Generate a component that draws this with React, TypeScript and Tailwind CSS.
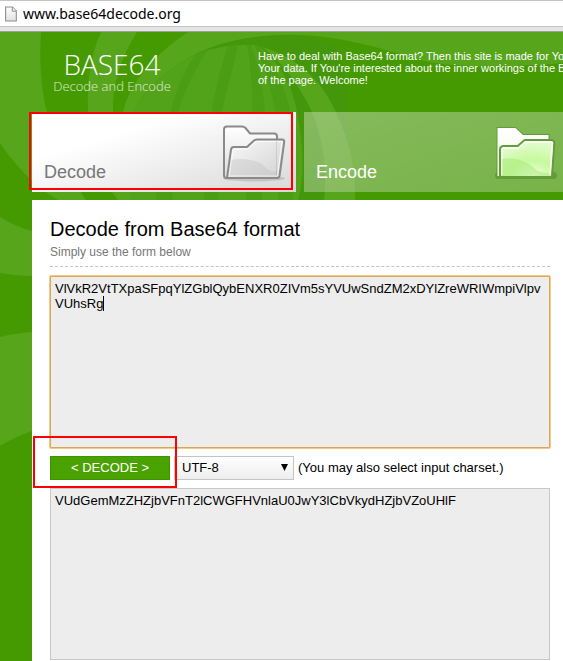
const INPUT_TEXT =
  "VlVkR2VtTXpaSFpqYlZGblQybENXR0ZIVm5sYVUwSndZM2xDYlZreWRIWmpiVlpvVUhsRg";
const OUTPUT_TEXT = "VUdGemMzZHZjbVFnT2lCWGFHVnlaU0JwY3lCbVkydHZjbVZoUHlF";

const PageIcon = () => (
  <svg viewBox="0 0 12 16" className="h-4 w-3 shrink-0" aria-hidden="true">
    <defs>
      <linearGradient id="sheet" x1="0" y1="0" x2="0" y2="1">
        <stop offset="0" stopColor="#fff" />
        <stop offset="1" stopColor="#e2e2e2" />
      </linearGradient>
    </defs>
    <path
      d="M.6 1h6.9L11.3 5v10H.6z"
      fill="url(#sheet)"
      stroke="#8e8e8e"
      strokeWidth="1.1"
    />
    <path d="M7.3 1v4.2h4" fill="#f6f6f6" stroke="#8e8e8e" />
  </svg>
);

const Sunburst = () => (
  <svg
    viewBox="0 32 563 629"
    className="absolute left-0 top-0 w-[563px]"
    aria-hidden="true"
  >
    <g fill="#56a51b">
      <path d="M0 32H41C39 60 41 90 47 112C55 146 68 174 86 200H58C34 186 14 164 0 143Z" />
      <path d="M101 32H137C120 60 112 85 113 112C116 150 130 180 152 200H118C96 172 88 145 88 112C87 82 90 56 101 32Z" />
      <path d="M188 32H563V63C510 68 450 68 420 60C380 48 340 36 300 35C270 34 235 38 210 48C175 62 146 86 133 112H123C130 82 155 54 188 32Z" />
      <path d="M0 217C10 223 21 228 32 231V276C20 276 10 275 0 273Z" />
      <path d="M0 337C12 334 22 333 32 332V431C20 435 10 440 0 446Z" />
    </g>
    {/* shaded arch */}
    <path
      d="M133 112C146 86 175 62 210 48C235 38 270 34 300 36C315 38 330 42 340 50L350 112L345 200H133Z"
      fill="#449512"
      opacity="0.6"
    />
    <path
      d="M130 116C145 86 175 62 205 51C222 46 238 44 257 45C280 60 294 90 297 112C304 145 304 180 298 200H130Z"
      fill="#52a21a"
    />
    {/* dark ribs inside the arch */}
    <g fill="#479a0f" opacity="0.6">
      <path d="M197 53L207 50C196 70 184 90 178 112L172 200H156C160 160 168 90 197 53Z" />
      <path d="M228 46L238 45C233 70 226 90 222 112L218 200H204C206 150 212 90 228 46Z" />
      <path d="M247 45H251C259 66 263 90 265 112L262 200H246C252 150 256 90 247 45Z" />
      <path d="M254 45H257C276 66 286 90 290 112C297 145 297 175 292 200H278C284 150 276 86 254 45Z" />
    </g>
    <path
      d="M262 47C300 58 322 82 336 112C350 142 356 170 355 200H324C328 166 322 138 312 112C300 86 282 62 262 47Z"
      fill="#56a51b"
    />
  </svg>
);

const GrayFolder = () => (
  <svg viewBox="0 0 64 60" className="h-15 w-16" aria-hidden="true">
    <defs>
      <linearGradient id="grayBack" x1="0" y1="0" x2="0" y2="1">
        <stop offset="0" stopColor="#fff" />
        <stop offset="1" stopColor="#dcdcdc" />
      </linearGradient>
      <linearGradient id="grayFront" x1="0" y1="0" x2="1" y2="1">
        <stop offset="0" stopColor="#fafafa" />
        <stop offset="1" stopColor="#d2d2d2" />
      </linearGradient>
    </defs>
    <ellipse cx="32" cy="56.500" rx="31" ry="3" fill="#000" opacity="0.12" />
    <path
      d="M4.500 56C3 56 2 55 2 53.500V7.500C2 5.500 3 4.500 5 4.500H20C21.500 4.500 22.500 5 23.500 6L28 11.500H52C54 11.500 55 12.500 55 14.500V50L50 56Z"
      fill="url(#grayBack)"
      stroke="#8a8a8a"
      strokeWidth="2"
    />
    <path
      d="M5 56L9 27.500C9.300 25.500 10 25 12 25H25L32 18.500C33 17.800 34 17.500 35 17.500H60C61.500 17.500 62.500 18.500 62.200 20L57.500 54C57.200 55.500 56.500 56 55 56H5Z"
      fill="url(#grayFront)"
      stroke="#8a8a8a"
      strokeWidth="2"
      strokeLinejoin="round"
    />
    <path
      d="M7.500 53.500L11 28.500C11.200 27.300 11.500 27 12.500 27H26L33 20.500C34 19.700 34.500 19.500 35.500 19.500H60L55.500 53.800Z"
      fill="none"
      stroke="#fff"
      opacity="0.8"
    />
    <path
      d="M9.500 38C22 35 38 39 42 44C48 50 52 50 56 49L55 54H7.500Z"
      fill="#bdbdbd"
      opacity="0.35"
    />
    <path d="M54.500 19V54" stroke="#999" opacity="0.3" />
  </svg>
);

const GreenFolder = () => (
  <svg viewBox="0 0 64 60" className="h-15 w-16" aria-hidden="true">
    <defs>
      <linearGradient id="greenBack" x1="0" y1="0" x2="0" y2="1">
        <stop offset="0" stopColor="#fff" />
        <stop offset="1" stopColor="#ecfbdc" />
      </linearGradient>
      <radialGradient id="greenFront" cx="0.6" cy="1" r="0.9">
        <stop offset="0" stopColor="#f0ffe0" />
        <stop offset="0.5" stopColor="#c6fa9c" />
        <stop offset="1" stopColor="#e0fbc9" />
      </radialGradient>
    </defs>
    <rect x="1" y="50" width="62" height="7" rx="3.500" fill="#4c8427" opacity="0.5" />
    <path
      d="M3.500 54V6H21.500L29 13H54.500V19L50 54Z"
      fill="url(#greenBack)"
      stroke="#639c3a"
      strokeWidth="2"
      paintOrder="stroke"
    />
    <path
      d="M7 54V28C7 26 8 25 10 25H24L31 19H57C58.500 19 59.500 20 59.300 21.500L57 54Z"
      fill="url(#greenFront)"
      stroke="#639c3a"
      strokeWidth="4"
      strokeLinejoin="round"
      paintOrder="stroke"
    />
    <path
      d="M8 53V28C8 26.500 8.500 26 10 26H24.500L31.500 20H57C58 20 58.500 20.500 58.300 21.500L56 53"
      fill="none"
      stroke="#fff"
      strokeWidth="1.500"
    />
    <path
      d="M8 37C20 34 34 40 40 46C44 50 50 51 56 51.500V54H8Z"
      fill="#a7e779"
      opacity="0.5"
    />
  </svg>
);

const Tabs = () => (
  <nav className="relative flex gap-2 overflow-hidden pl-8">
    <a
      href="#decode"
      className="flex h-20 w-66 shrink-0 items-end justify-between bg-linear-to-br from-white from-30% to-[#d8d8d8] pl-3 pr-2.5 text-lg text-[#777]"
    >
      <span className="pb-1.5">Decode</span>
      <span className="self-center">
        <GrayFolder />
      </span>
    </a>
    <a
      href="#encode"
      className="flex h-20 w-66 shrink-0 items-end justify-between bg-[#b9d2a2]/45 bg-linear-to-br from-white/10 to-transparent pl-3 pr-2.5 text-lg text-white"
    >
      <span className="pb-1.5">Encode</span>
      <span className="self-center">
        <GreenFolder />
      </span>
    </a>
    <span className="pointer-events-none absolute left-[29px] top-0 h-[78px] w-66 border-2 border-[#f00]" />
  </nav>
);

export default function App() {
  return (
    <div className="flex min-h-screen flex-col overflow-hidden bg-white font-['Liberation_Sans',Arial,sans-serif] text-black">
      {/* Address bar */}
      <div className="border-b border-[#a0a0a0] bg-[#e4e4e4] pb-1">
        <div className="flex h-[27px] items-center gap-1.5 border-y border-[#c4c4c4] bg-white pl-[5px]">
          <PageIcon />
          <input
            aria-label="Address"
            defaultValue="www.base64decode.org"
            className="w-full bg-transparent font-['Noto_Sans',sans-serif] text-[14px] leading-5 outline-none"
          />
        </div>
      </div>

      <div className="relative flex flex-1 flex-col overflow-hidden bg-[#449a00]">
        <Sunburst />

        <header className="relative flex h-20 items-start pl-8 text-white">
          <div className="ml-5 w-[120px] shrink-0 pt-[18px] text-center font-['Open_Sans',sans-serif] font-light">
            <p className="whitespace-nowrap text-[28px] leading-7">BASE64</p>
            <p className="whitespace-nowrap text-[13px] leading-4 text-white/80">
              Decode and Encode
            </p>
          </div>
          <p className="ml-[86px] whitespace-nowrap pt-[18px] text-[11px] leading-3">
            Have to deal with Base64 format? Then this site is made for You
            <br />
            Your data. If You're interested about the inner workings of the B
            <br />
            of the page. Welcome!
          </p>
        </header>

        <Tabs />

        <main className="relative ml-8 mt-2 flex-1 bg-white pl-[18px] pr-[13px] pt-[15px]">
          <div className="mb-[9px] border-b border-dashed border-[#c4c4c4] pb-1.5">
            <h1 className="mb-px text-xl leading-7">Decode from Base64 format</h1>
            <p className="text-xs text-[#777]">Simply use the form below</p>
          </div>

          <form className="flex flex-col gap-2 text-[13px]">
            <div className="relative flex">
              <textarea
                aria-label="Text to decode"
                defaultValue={INPUT_TEXT}
                className="h-[172px] w-full resize-none break-all rounded-[1px] border border-[#d9a755] bg-[#ededed] p-1 leading-[15px] outline-none ring-1 ring-[#f0cb86]"
              />
              <span className="absolute left-[53px] top-5 h-[15px] w-px bg-black" />
            </div>

            <div className="relative flex h-6 items-center gap-1">
              <button
                type="button"
                className="h-6 w-[120px] shrink-0 border border-[#3f9200] bg-[#4aa200] text-white"
              >
                &lt; DECODE &gt;
              </button>
              <div className="relative shrink-0">
                <select
                  id="charset"
                  defaultValue="UTF-8"
                  className="block h-6 w-[120px] appearance-none border border-[#c4c4c4] bg-linear-to-b from-white to-[#eee] px-[7px]"
                >
                  <option>UTF-8</option>
                </select>
                <svg
                  viewBox="0 0 7 7"
                  className="pointer-events-none absolute right-1.5 top-2 size-[7px]"
                  aria-hidden="true"
                >
                  <path d="M0 0h7L3.500 7z" />
                </svg>
              </div>
              <label htmlFor="charset" className="whitespace-nowrap">
                (You may also select input charset.)
              </label>
              <span className="pointer-events-none absolute -left-[17px] -top-5 h-[52px] w-36 border-2 border-[#f00]" />
            </div>

            <textarea
              aria-label="Decoded text"
              readOnly
              defaultValue={OUTPUT_TEXT}
              className="h-[172px] w-full resize-none break-all border border-[#c8c8c8] bg-[#ededed] p-1 leading-[15px] outline-none"
            />
          </form>
        </main>
      </div>
    </div>
  );
}
